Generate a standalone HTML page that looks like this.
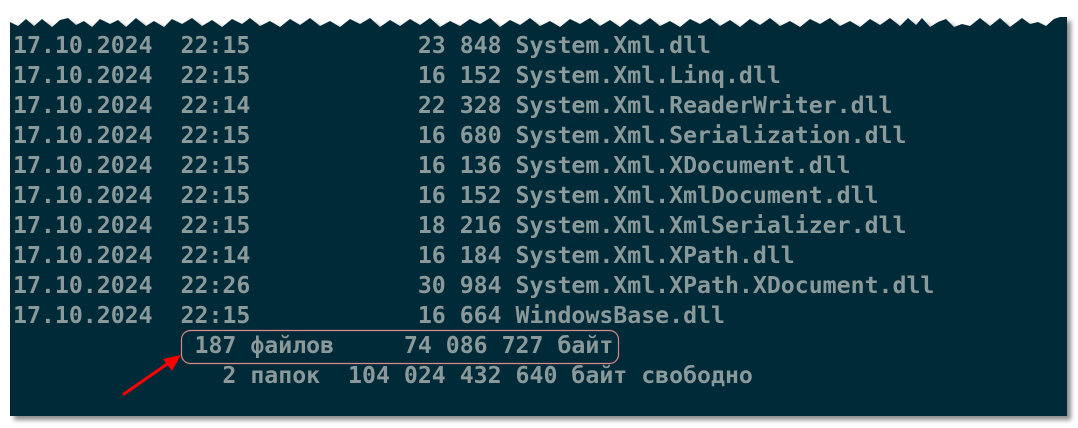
<!DOCTYPE html>
<html><head><meta charset="utf-8"><style>
html,body{margin:0;padding:0;background:#fff;width:1078px;height:428px;overflow:hidden;position:relative}
svg.bg{position:absolute;left:0;top:0}
pre{position:absolute;left:13px;top:31px;margin:0;font-family:"DejaVu Sans Mono","Liberation Mono",monospace;font-weight:bold;font-size:23.2px;line-height:30px;color:#8a9999;white-space:pre}
</style></head><body>
<svg class="bg" width="1078" height="428">
<defs><filter id="s" x="-5%" y="-10%" width="110%" height="120%"><feDropShadow dx="4" dy="4" stdDeviation="2.5" flood-color="#000" flood-opacity="0.45"/></filter></defs>
<path filter="url(#s)" fill="#022a37" d="M10,22 L18,26 L26,19 L34,26 L42,19 L52,27 L60,20 L68,18 L76,25 L84,21 L92,27 L100,19 L110,24 L118,20 L126,27 L136,18 L146,26 L154,21 L164,27 L172,19 L182,24 L192,18 L202,26 L212,20 L222,27 L232,19 L242,24 L250,18 L260,26 L270,21 L280,27 L290,19 L300,25 L310,18 L320,26 L330,21 L340,27 L350,19 L360,24 L370,18 L380,27 L390,20 L400,26 L410,19 L420,25 L430,18 L440,27 L450,21 L460,26 L470,19 L480,24 L490,18 L500,27 L510,20 L520,25 L530,18 L540,26 L550,21 L560,27 L570,19 L580,24 L590,18 L600,26 L610,20 L620,27 L630,19 L640,25 L650,18 L660,26 L670,21 L680,27 L690,19 L700,24 L710,18 L720,26 L730,20 L740,27 L750,19 L760,25 L770,18 L780,26 L790,21 L800,27 L810,19 L820,24 L830,18 L840,26 L850,21 L860,27 L870,19 L880,25 L890,18 L900,26 L908,18 L916,25 L922,18 L930,27 L938,22 L946,19 L954,27 L962,24 L970,26 L980,18 L990,26 L1000,18 L1010,27 L1022,18 L1030,24 L1038,22 L1046,26 L1054,19 L1060,17 L1067,17 L1067,416 L10,416 Z"/>
<rect x="181.5" y="330.5" width="437" height="33" rx="9" fill="none" stroke="#d98a8a" stroke-width="1.2"/>
<line x1="124" y1="394" x2="170" y2="362" stroke="#f00" stroke-width="3" stroke-linecap="round"/>
<polygon points="181,355 163,359 172,371" fill="#f00"/>
</svg>
<pre>17.10.2024  22:15            23 848 System.Xml.dll
17.10.2024  22:15            16 152 System.Xml.Linq.dll
17.10.2024  22:14            22 328 System.Xml.ReaderWriter.dll
17.10.2024  22:15            16 680 System.Xml.Serialization.dll
17.10.2024  22:15            16 136 System.Xml.XDocument.dll
17.10.2024  22:15            16 152 System.Xml.XmlDocument.dll
17.10.2024  22:15            18 216 System.Xml.XmlSerializer.dll
17.10.2024  22:14            16 184 System.Xml.XPath.dll
17.10.2024  22:26            30 984 System.Xml.XPath.XDocument.dll
17.10.2024  22:15            16 664 WindowsBase.dll
             187 файлов     74 086 727 байт
               2 папок  104 024 432 640 байт свободно</pre>
</body></html>
